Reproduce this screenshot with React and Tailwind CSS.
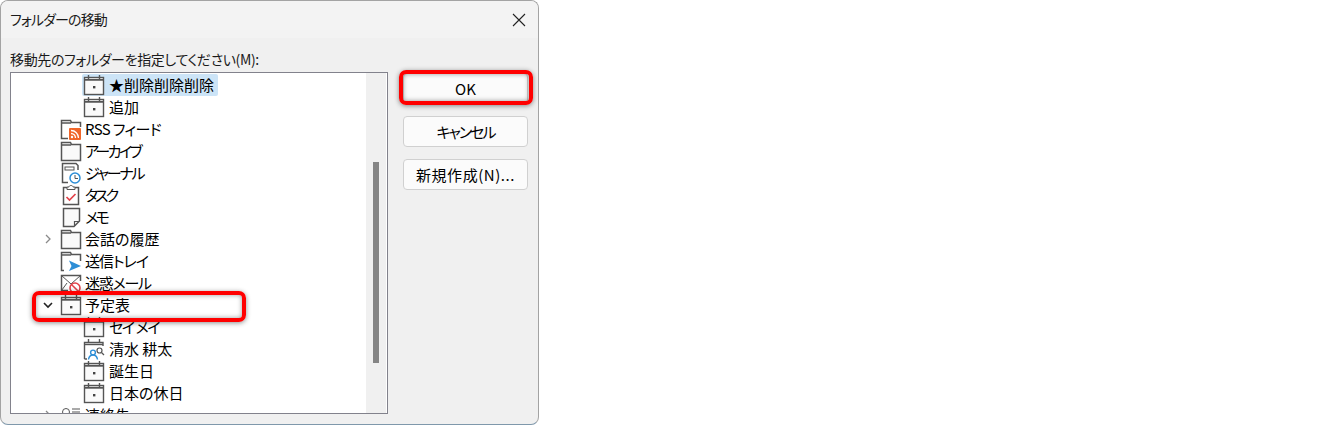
import React from "react";

const jpFont = "font-['Noto_Sans_CJK_JP','Noto_Sans',sans-serif] [font-feature-settings:'palt']";

const CalendarIcon = ({ search }) => (
  <svg width="22" height="22" viewBox="0 0 22 22" fill="none" stroke="#555" strokeWidth="1.4">
    {search ? (
      <>
        <path d="M1.5 21V4.5H20V8M1.5 21H4" />
        <path d="M1.5 6.5H20" />
        <path d="M5.5 1V5M16.5 1V5" />
        <circle cx="16.5" cy="12.5" r="2.5" strokeWidth="1.2" />
        <path d="M18.5 14.5L21 17" strokeWidth="1.2" />
        <circle cx="10" cy="14.5" r="2.4" stroke="#2e8ed6" />
        <path d="M5.5 21.5c.5-3 2-4.5 4.5-4.5s4 1.5 4.5 4.5" stroke="#2e8ed6" />
      </>
    ) : (
      <>
        <rect x="1.5" y="3.5" width="19" height="17" fill="#fafafa" />
        <path d="M1.5 5.8H20.5" strokeWidth="1.8" />
        <path d="M5.5 1V5M16.5 1V5" />
        <rect x="10" y="12" width="2.4" height="2.4" fill="#444" stroke="none" />
      </>
    )}
  </svg>
);

const FolderBase = ({ children, open }) => (
  <svg width="22" height="22" viewBox="0 0 22 22" fill="none" stroke="#555">
    <path d={open ? "M4 20.5H1.5V2.5H10.5L11.5 4.5H20.5V11" : "M1.5 20.5V2.5H10.5L11.5 4.5H20.5V20.5Z"} fill={open ? "none" : "#fafafa"} strokeWidth="1.5" />
    <path d="M1.5 5H11" strokeWidth="1.4" />
    {children}
  </svg>
);

const RssIcon = () => (
  <svg width="22" height="22" viewBox="0 0 22 22" fill="none">
    <path d="M8 20.5H1.5V2.5H10.5L11.5 4.5H20.5V9" stroke="#555" strokeWidth="1.5" />
    <path d="M1.5 5H11" stroke="#555" strokeWidth="1.4" />
    <rect x="9" y="10" width="12" height="12" rx="1" fill="#f0662a" />
    <circle cx="12" cy="19" r="1.2" fill="#fff" />
    <path d="M11 15.5c2.5 0 4.5 2 4.5 4.5M11 12.5c4.2 0 7.5 3.3 7.5 7.5" stroke="#fff" strokeWidth="1.3" />
  </svg>
);

const JournalIcon = () => (
  <svg width="22" height="22" viewBox="0 0 22 22" fill="none">
    <path d="M8 20.5H2.5V1.5H16L18 3.5V8" stroke="#555" strokeWidth="1.5" />
    <rect x="5" y="5" width="9" height="3" stroke="#555" />
    <circle cx="15" cy="16" r="5" fill="#fff" stroke="#2e8ed6" strokeWidth="1.5" />
    <path d="M15 13V16.5H18" stroke="#555" />
  </svg>
);

const TaskIcon = () => (
  <svg width="22" height="22" viewBox="0 0 22 22" fill="none">
    <path d="M7 3.5H3.5V20.5H18.5V3.5H15" stroke="#555" strokeWidth="1.5" />
    <path d="M7 5.5V3H9C9 1 13 1 13 3H15V5.5Z" stroke="#555" />
    <path d="M6.5 13L9.5 16L15.5 10" stroke="#e2434b" strokeWidth="1.7" />
  </svg>
);

const NoteIcon = () => (
  <svg width="22" height="22" viewBox="0 0 22 22" fill="none" stroke="#555" strokeWidth="1.5">
    <path d="M3.5 2.5H19.5V15L14 20.5H3.5Z" fill="#fafafa" />
    <path d="M19 15.5H14.5V20" strokeWidth="1.2" />
  </svg>
);

const SentIcon = () => (
  <FolderBase open>
    <path d="M9 10.5L21 16L9 21L11.5 16Z" fill="#2e8ed6" stroke="none" />
  </FolderBase>
);

const JunkIcon = () => (
  <svg width="22" height="22" viewBox="0 0 22 22" fill="none">
    <path d="M8 18.5H1.5V3.5H20.5V9" stroke="#555" strokeWidth="1.5" />
    <path d="M1.5 3.5L11 12L20.5 3.5M1.5 18.5L7 11" stroke="#555" />
    <circle cx="15" cy="16" r="5" fill="#fff" stroke="#e2434b" strokeWidth="1.6" />
    <path d="M11.7 12.7L18.3 19.3" stroke="#e2434b" strokeWidth="1.6" />
  </svg>
);

const ContactIcon = () => (
  <svg width="22" height="22" viewBox="0 0 22 22" fill="none" stroke="#555">
    <circle cx="6" cy="8" r="3.5" />
    <path d="M12 5H20M12 8H20" />
  </svg>
);

const Chevron = ({ open }) => (
  <svg width="12" height="12" viewBox="0 0 12 12" fill="none" stroke={open ? "#222" : "#8a8a8a"} strokeWidth={open ? 1.6 : 1.3}>
    <path d={open ? "M2 4L6 8L10 4" : "M4 2L8 6L4 10"} />
  </svg>
);

const rows = [
  { level: 2, icon: <CalendarIcon />, label: "★削除削除削除", selected: true },
  { level: 2, icon: <CalendarIcon />, label: "追加" },
  { level: 1, icon: <RssIcon />, label: "RSS フィード", tight: "tracking-[-0.6px]" },
  { level: 1, icon: <FolderBase />, label: "アーカイブ", tight: "tracking-[-2.6px]" },
  { level: 1, icon: <JournalIcon />, label: "ジャーナル", tight: "tracking-[-2.2px]" },
  { level: 1, icon: <TaskIcon />, label: "タスク", tight: "tracking-[-3px]" },
  { level: 1, icon: <NoteIcon />, label: "メモ", tight: "tracking-[-2.5px]" },
  { level: 1, icon: <FolderBase />, label: "会話の履歴", chevron: "closed" },
  { level: 1, icon: <SentIcon />, label: "送信トレイ", tight: "tracking-[-1px]" },
  { level: 1, icon: <JunkIcon />, label: "迷惑メール", tight: "tracking-[-1.2px]" },
  { level: 1, icon: <CalendarIcon />, label: "予定表", chevron: "open" },
  { level: 2, icon: <CalendarIcon />, label: "セイ メイ", tight: "tracking-[-1.4px]" },
  { level: 2, icon: <CalendarIcon search />, label: "清水 耕太" },
  { level: 2, icon: <CalendarIcon />, label: "誕生日" },
  { level: 2, icon: <CalendarIcon />, label: "日本の休日" },
  { level: 1, icon: <ContactIcon />, label: "連絡先", chevron: "closed" },
];

const TreeRow = ({ row }) => (
  <div className={`flex h-[22px] items-center ${row.level === 2 ? "pl-[50px]" : "pl-[27px]"}`}>
    <div className="flex h-[22px] w-[21px] items-center justify-center pr-[2px]">
      {row.chevron && <Chevron open={row.chevron === "open"} />}
    </div>
    <div className={`flex h-[22px] items-center rounded-[2px] pl-[1px] pr-[4px] ${row.selected ? "bg-[#cce4f7]" : ""}`}>
      {row.icon}
      <span className={`whitespace-nowrap text-[15px] leading-[22px] text-black ${row.level === 2 ? "ml-[4px]" : "ml-[3px]"} ${row.tight || ""}`}>{row.label}</span>
    </div>
  </div>
);

const DialogButton = ({ children, className = "" }) => (
  <button className={`flex h-[31px] w-[125px] items-center justify-center rounded-[4px] border border-[#d0d0d0] bg-[#fbfbfb] pt-[1px] text-[15px] text-black ${className}`}>
    {children}
  </button>
);

export default function App() {
  return (
    <div className={`relative h-[426px] w-[1344px] overflow-hidden bg-white ${jpFont}`}>
      <div className="relative flex h-[425px] w-[539px] flex-col overflow-hidden rounded-[8px] border border-[#a3a3a3] border-b-[#7f98ab] bg-[#f0f0f0]">
        {/* Title bar */}
        <div className="flex h-[37px] shrink-0 items-center justify-between bg-[#f3f3f3] pl-[9px] pr-[12px]">
          <span className="text-[14px] tracking-[-0.85px] text-[#1a1a1a]">フォルダーの移動</span>
          <svg width="14" height="14" viewBox="0 0 14 14" fill="none" stroke="#222" strokeWidth="1.1">
            <path d="M1 1L13 13M13 1L1 13" />
          </svg>
        </div>

        <div className="px-[9px] pt-[11px] text-[14px] leading-[20px] tracking-[-0.36px] text-[#1a1a1a]">移動先のフォルダーを指定してください(M):</div>

        <div className="mt-[3px] flex gap-[15px] pl-[9px]">
          {/* Folder tree */}
          <div className="flex h-[342px] w-[378px] overflow-hidden border border-[#82828c] bg-white">
            <div className="min-w-0 flex-1 overflow-hidden pt-px">
              {rows.map((row) => (
                <TreeRow key={row.label} row={row} />
              ))}
            </div>
            <div className="mr-px w-[20px] shrink-0 bg-[#f0f0f0] pl-[7px] pt-[89px]">
              <div className="h-[201px] w-[6px] bg-[#858585]" />
            </div>
          </div>

          <div className="flex flex-col gap-[12px] pt-[1px]">
            <DialogButton>OK</DialogButton>
            <DialogButton className="tracking-[-2px]">キャンセル</DialogButton>
            <DialogButton className="tracking-[0.55px]">新規作成(N)...</DialogButton>
          </div>
        </div>

        {/* Red annotation frames */}
        <div className="absolute left-[31px] top-[290px] h-[31px] w-[214px] rounded-[7px] border-[4px] border-[#ff0000] shadow-[0_1px_5px_rgba(0,0,0,0.45),inset_0_0_5px_rgba(0,0,0,0.4)]" />
        <div className="absolute left-[398px] top-[69px] h-[35px] w-[134px] rounded-[7px] border-[4px] border-[#ff0000] shadow-[0_1px_5px_rgba(0,0,0,0.45),inset_0_0_5px_rgba(0,0,0,0.4)]" />
      </div>
    </div>
  );
}
